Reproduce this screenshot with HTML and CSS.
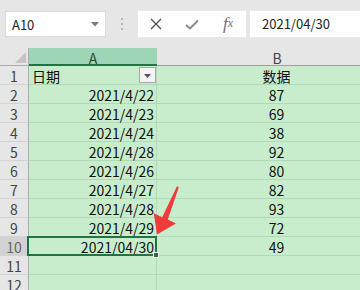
FILE: index.html
```html
<!DOCTYPE html>
<html lang="zh-CN">
<head>
<meta charset="utf-8">
<link rel="stylesheet" href="styles.css">
</head>
<body>
<div class="app">
  <div class="toolbar">
    <div class="namebox">
      <span>A10</span>
      <svg class="nb-arrow" width="8" height="5" viewBox="0 0 8 5"><path d="M0 0H8L4 4.5Z" fill="#7a7a7a"/></svg>
    </div>
    <div class="sep"><i></i><i></i><i></i></div>
    <div class="fbtns">
      <span class="fb"><svg width="12" height="12" viewBox="0 0 12 12"><path d="M1 1L11 11M11 1L1 11" stroke="#555" stroke-width="1.4" fill="none"/></svg></span>
      <span class="fb"><svg width="14" height="11" viewBox="0 0 14 11"><path d="M1 6L5 9.5L13 1.5" stroke="#8a8a8a" stroke-width="2" fill="none"/></svg></span>
      <span class="fb fx">f<sub>x</sub></span>
    </div>
    <div class="formula">2021/04/30</div>
  </div>
  <div class="sheet">
    <div class="corner"><span class="tri"></span></div>
    <div class="ch ch-a">A</div>
    <div class="ch">B</div>

    <div class="rh">1</div>
    <div class="c a left a1">日期<span class="filter"><svg width="7" height="4" viewBox="0 0 7 4"><path d="M0 0H7L3.5 4Z" fill="#555"/></svg></span></div>
    <div class="c b">数据</div>

    <div class="rh">2</div><div class="c a">2021/4/22</div><div class="c b">87</div>
    <div class="rh">3</div><div class="c a">2021/4/23</div><div class="c b">69</div>
    <div class="rh">4</div><div class="c a">2021/4/24</div><div class="c b">38</div>
    <div class="rh">5</div><div class="c a">2021/4/28</div><div class="c b">92</div>
    <div class="rh">6</div><div class="c a">2021/4/26</div><div class="c b">80</div>
    <div class="rh">7</div><div class="c a">2021/4/27</div><div class="c b">82</div>
    <div class="rh">8</div><div class="c a">2021/4/28</div><div class="c b">93</div>
    <div class="rh">9</div><div class="c a">2021/4/29</div><div class="c b">72</div>
    <div class="rh rh-sel">10</div><div class="c a sel">2021/04/30<span class="handle"></span></div><div class="c b">49</div>
    <div class="rh">11</div><div class="c a"></div><div class="c b"></div>
    <div class="rh">12</div><div class="c a"></div><div class="c b"></div>
  </div>
  <svg class="redarrow" width="360" height="290" viewBox="0 0 360 290">
    <polygon points="177.0,186.3 178.8,187.2 167.8,219.4 175.9,223.4 157,234.5 153.8,213.2 162.2,217.2" fill="#f03b3b"/>
  </svg>
</div>
</body>
</html>
```
FILE: styles.css
```css
* {
  box-sizing: border-box;
  margin: 0;
  padding: 0;
}

html, body {
  width: 360px;
  height: 290px;
  overflow: hidden;
  background: #e6e6e6;
  font-family: "Noto Sans CJK SC", "Noto Sans", sans-serif;
}

.app {
  position: relative;
  width: 360px;
  height: 290px;
  overflow: hidden;
}

/* ---------- formula bar ---------- */
.toolbar {
  display: flex;
  align-items: flex-start;
  height: 48px;
  padding: 11px 0 0 5px;
}

.namebox {
  width: 101px;
  height: 26px;
  background: #fff;
  border: 1px solid #dadada;
  display: flex;
  align-items: center;
  justify-content: space-between;
  padding: 0 6px 0 6px;
  font-size: 13px;
  color: #222;
}

.sep {
  width: 32px;
  height: 26px;
  display: flex;
  flex-direction: column;
  align-items: center;
  justify-content: center;
  gap: 3px;
}

.sep i {
  display: block;
  width: 2px;
  height: 2px;
  background: #b8b8b8;
}

.fbtns {
  width: 108px;
  height: 26px;
  background: #fff;
  display: grid;
  grid-template-columns: repeat(3, 36px);
  align-items: center;
  justify-items: center;
}

.fb {
  display: flex;
  align-items: center;
  justify-content: center;
}

.fx {
  font-family: "Liberation Serif", serif;
  font-style: italic;
  font-size: 17px;
  color: #6e6e6e;
  line-height: 1;
  padding-bottom: 2px;
}

.fx sub {
  font-size: 12px;
  vertical-align: -1px;
}

.formula {
  flex: 1;
  margin-left: 4px;
  height: 26px;
  background: #fff;
  padding-left: 12px;
  font-size: 13px;
  line-height: 26px;
  color: #222;
}

/* ---------- sheet ---------- */
.sheet {
  display: grid;
  grid-template-columns: 29px 128px 240px;
  grid-template-rows: 18px repeat(12, 19px);
  width: 397px;
}

.corner {
  position: relative;
  background: #e6e6e6;
  border-right: 1px solid #ababab;
  border-bottom: 1px solid #ababab;
}

.tri {
  position: absolute;
  right: 2px;
  bottom: 2px;
  width: 11px;
  height: 11px;
  background: #c4c4c4;
  clip-path: polygon(100% 0, 100% 100%, 0 100%);
}

.ch {
  background: #e6e6e6;
  border-bottom: 1px solid #9e9e9e;
  text-align: center;
  font-size: 14px;
  line-height: 16px;
  padding-top: 2px;
  color: #444;
}

.ch-a {
  background: #9fd5b7;
  border-bottom: 2px solid #217346;
  color: #1f4f35;
}

.rh {
  background: #e6e6e6;
  border-right: 1px solid #ababab;
  border-bottom: 1px solid #d3d3d3;
  text-align: center;
  font-size: 14px;
  line-height: 17px;
  padding-top: 2px;
  color: #444;
  overflow: hidden;
}

.rh-sel {
  background: #d2d2d2;
  color: #666;
}

.c {
  background: #c7edcc;
  border-right: 1px solid #b2d8b8;
  border-bottom: 1px solid #b2d8b8;
  font-size: 14px;
  line-height: 17px;
  padding-top: 2px;
  color: #111;
  white-space: nowrap;
}

.a {
  text-align: right;
  padding-right: 2px;
}

.a.left {
  text-align: left;
  padding-left: 3px;
}

.b {
  text-align: center;
}

.a1 {
  position: relative;
}

.filter {
  position: absolute;
  right: 0;
  top: 1px;
  width: 17px;
  height: 16px;
  background: #f4f4f4;
  border: 1px solid #a9a9a9;
  display: flex;
  align-items: center;
  justify-content: center;
  padding-top: 1px;
}

.sel {
  position: relative;
}

.sel::after {
  content: "";
  position: absolute;
  left: -2px;
  top: -1px;
  right: -1px;
  bottom: -1px;
  border: 2px solid #217346;
}

.handle {
  position: absolute;
  right: -3px;
  bottom: -3px;
  width: 6px;
  height: 6px;
  background: #217346;
  border: 1px solid #fff;
  z-index: 2;
}

.redarrow {
  position: absolute;
  left: 0;
  top: 0;
  pointer-events: none;
}
```
